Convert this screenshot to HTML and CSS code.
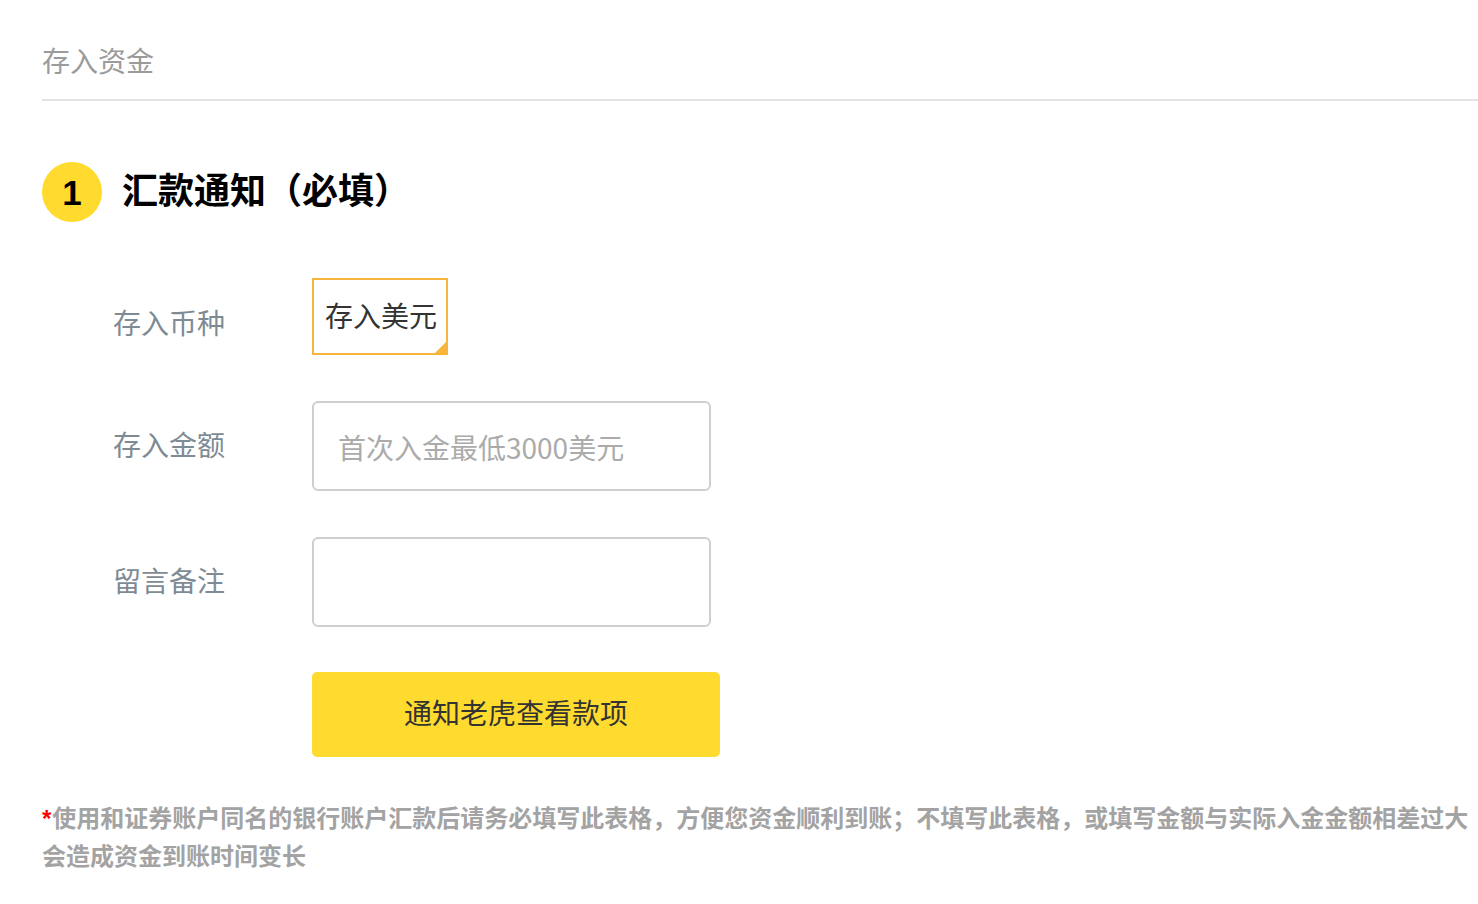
FILE: index.html
```html
<!DOCTYPE html>
<html lang="zh-CN">
<head>
    <meta charset="UTF-8">
    <meta name="viewport" content="width=device-width, initial-scale=1.0">
    <title>存入资金</title>
    <link rel="stylesheet" href="styles.css">
</head>
<body>
    <div id="page">
        <h2 class="page-title">存入资金</h2>

        <div class="step-head">
            <span class="step-num">1</span>
            <h3 class="step-title">汇款通知（必填）</h3>
        </div>

        <form class="deposit-form" onsubmit="return false;">
            <div class="form-row row-currency">
                <label class="form-label">存入币种</label>
                <div class="currency-option selected">存入美元</div>
            </div>
            <div class="form-row">
                <label class="form-label" for="amount">存入金额</label>
                <input class="text-input" id="amount" type="text" placeholder="首次入金最低3000美元">
            </div>
            <div class="form-row row-remark">
                <label class="form-label" for="remark">留言备注</label>
                <input class="text-input" id="remark" type="text">
            </div>
            <div class="form-row row-submit">
                <span class="form-label"></span>
                <button class="submit-btn" type="submit">通知老虎查看款项</button>
            </div>
        </form>

        <p class="notice"><span class="star">*</span>使用和证券账户同名的银行账户汇款后请务必填写此表格，方便您资金顺利到账；不填写此表格，或填写金额与实际入金金额相差过大会造成资金到账时间变长</p>
    </div>
</body>
</html>
```

FILE: styles.css
```css
body {
    margin: 0;
    font-family: "Noto Sans CJK SC", "Noto Sans", sans-serif;
    background: #fff;
}

#page {
    padding: 0 0 40px 42px;
}

.page-title {
    margin: 0;
    padding: 40px 0 19px;
    font-size: 28px;
    line-height: 40px;
    font-weight: normal;
    color: #9b9b9b;
    border-bottom: 2px solid #e3e3e3;
}

.step-head {
    display: flex;
    align-items: center;
    gap: 20px;
    margin-top: 61px;
}
.step-num {
    box-sizing: border-box;
    width: 60px;
    height: 60px;
    padding-top: 2px;
    border-radius: 50%;
    background-color: #fedb2e;
    display: flex;
    align-items: center;
    justify-content: center;
    font-family: "Liberation Sans", Arial, sans-serif;
    font-size: 35px;
    font-weight: bold;
    color: #000;
}
.step-title {
    margin: 0 0 8px;
    font-size: 36px;
    line-height: 44px;
    font-weight: bold;
    color: #000;
}

.deposit-form {
    margin-top: 56px;
}
.form-row {
    display: flex;
    align-items: center;
    margin-bottom: 46px;
}
.form-label {
    width: 199px;
    padding: 0 0 5px 71px;
    font-size: 28px;
    line-height: 36px;
    color: #7e8b94;
}
.row-currency .form-label {
    margin-top: 15px;
}

.currency-option {
    position: relative;
    box-sizing: border-box;
    width: 136px;
    height: 77px;
    border: 2px solid #f8b53c;
    padding: 0 0 4px 11px;
    display: flex;
    align-items: center;
    font-size: 28px;
    color: #333;
}
.currency-option.selected::after {
    content: "";
    position: absolute;
    right: 0;
    bottom: 0;
    border-style: solid;
    border-width: 0 0 11px 11px;
    border-color: transparent transparent #f8b53c transparent;
}

.text-input {
    box-sizing: border-box;
    width: 399px;
    height: 90px;
    border: 2px solid #cfcfcf;
    border-radius: 6px;
    padding: 2px 24px 0;
    font-family: inherit;
    font-size: 28px;
    color: #333;
    outline: none;
}
.text-input::placeholder {
    color: #ababab;
}

.row-remark {
    margin-bottom: 45px;
}
.row-submit {
    margin-bottom: 42px;
}
.submit-btn {
    width: 408px;
    height: 85px;
    border: none;
    border-radius: 5px;
    padding: 0 0 5px;
    background-color: #fedb2e;
    font-family: inherit;
    font-size: 28px;
    color: #333;
    cursor: pointer;
}

.notice {
    margin: 0;
    font-size: 24px;
    line-height: 36px;
    font-weight: bold;
    color: #a3a3a3;
}
.notice .star {
    display: inline-block;
    margin-right: 1px;
    font-family: "Liberation Sans", Arial, sans-serif;
    color: #f00;
}
```
